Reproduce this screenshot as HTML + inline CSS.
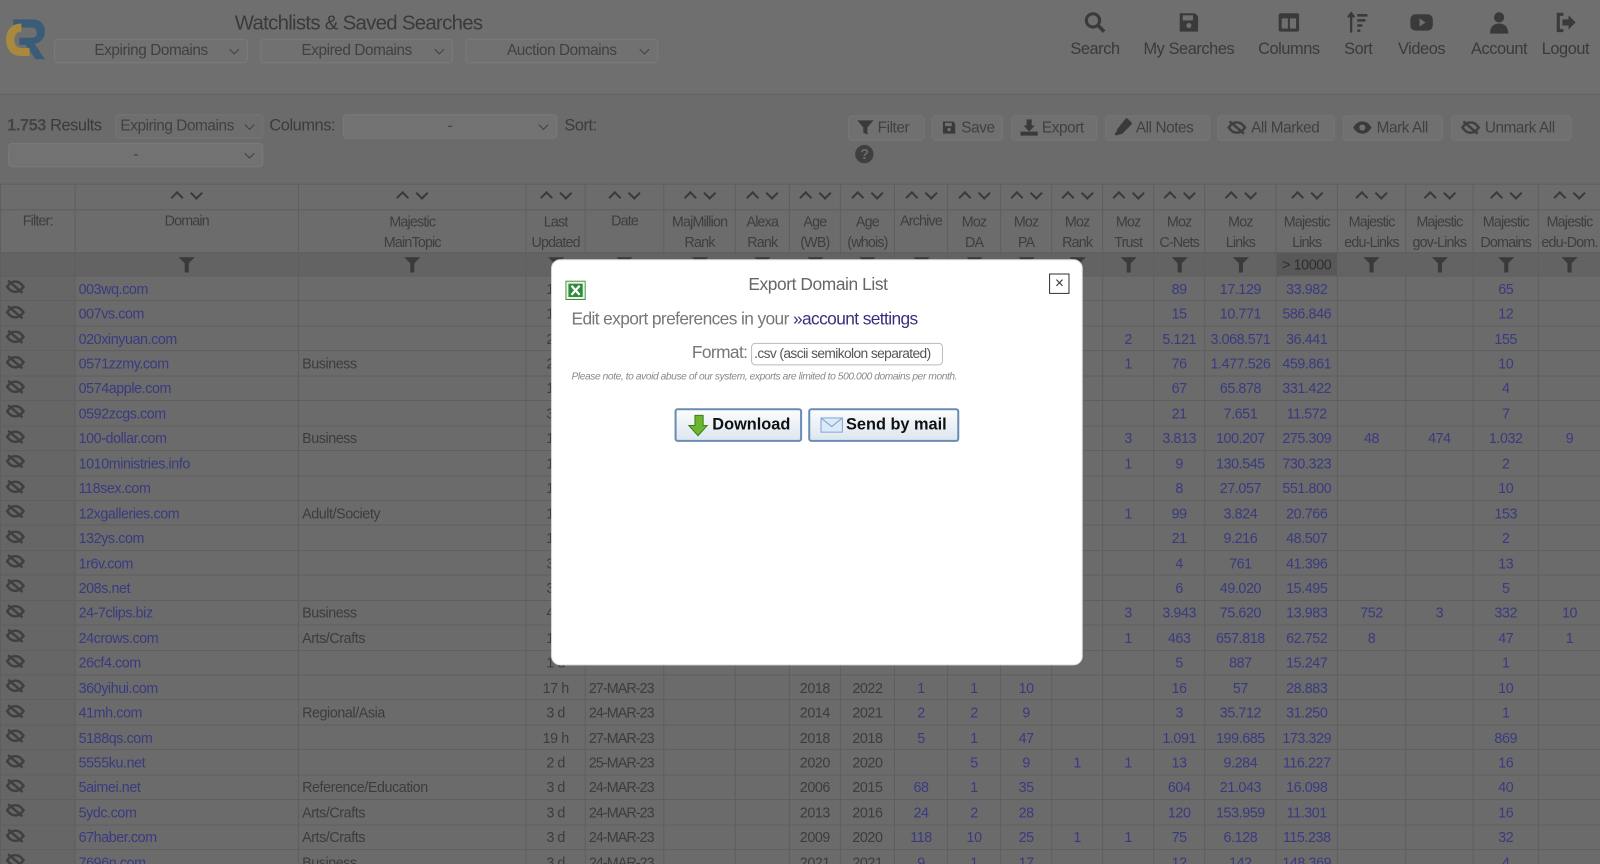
<!DOCTYPE html>
<html><head><meta charset="utf-8">
<style>
*{box-sizing:border-box;margin:0;padding:0}
html,body{width:1600px;height:864px;overflow:hidden}
body{background:#6b6b6b;font-family:"Liberation Sans",sans-serif;color:#3c3c3c;letter-spacing:-0.4px}
#wrap{position:relative;width:1568px;height:847px;overflow:hidden;transform:scale(1.0205);transform-origin:0 0;background:#6b6b6b}
.abs{position:absolute;white-space:nowrap}
.hdr{left:0;top:0;width:1600px;height:93px;background:#6f6f6f;border-bottom:1px solid #626262}
.sel{position:absolute;height:24px;border:1px solid #7a7a7a;border-radius:4px;background:#717171;font-size:15px;color:#404040;text-align:center;line-height:22px;white-space:nowrap}
.sel:after{content:"";position:absolute;right:9px;top:6px;width:6px;height:6px;border-right:1.5px solid #404040;border-bottom:1.5px solid #404040;transform:rotate(45deg)}
.nav{position:absolute;top:10px;text-align:center;font-size:16px;color:#3a3a3a;white-space:nowrap}
.nav svg{display:block;margin:0 auto 6px;height:24px}
.btn{position:absolute;top:113px;height:25px;border:1px solid #767676;border-radius:4px;background:#707070;font-size:15px;color:#404040;line-height:23px;padding-left:8px;white-space:nowrap}
.btn svg{vertical-align:-3px;margin-right:4px}
table{position:absolute;left:0;top:180px;border-collapse:collapse;table-layout:fixed;width:1568px;font-size:14px}
td,th{border:1px solid #5f5f5f;text-align:center;white-space:nowrap;overflow:hidden;font-weight:normal;padding:0}
th{color:#3e3e3e;line-height:20px}
tr.ar th{height:25px;background:#6c6c6c}
tr.lb th{height:42px;background:#6c6c6c;vertical-align:middle}
tr.fl th{height:23px;background:#636363}
tbody td{height:24.45px;color:#3a3a80}
tbody td.l{text-align:left;padding-left:3px}
tbody td.g{color:#3c3c3c}
tbody td.e{background:#666;text-align:left;padding-left:4px}
.arr{display:inline-block;width:9px;height:9px;border-left:2.5px solid #3a3a3a;border-top:2.5px solid #3a3a3a;transform:rotate(45deg);margin:6px 5px 0}
.arr.d{transform:rotate(-135deg);margin-top:0;vertical-align:4px}
.fi{display:inline-block;width:16px;height:15px;position:relative;top:3px}
.modal{left:540px;top:254px;width:521px;height:398px;background:#fff;border-radius:9px;border:1px solid #ddd}
.mb{position:absolute;top:145px;height:33px;border:2px solid #6a8cb3;border-radius:3px;background:linear-gradient(#fbfcfd,#dde6f0);font-family:"Liberation Sans",sans-serif;font-weight:bold;font-size:16px;color:#111;line-height:29px;letter-spacing:0}
</style></head><body><div id="wrap">
<svg width="0" height="0" style="position:absolute"><defs>
<symbol id="es" viewBox="0 0 20 16"><path d="M2 8c3-4 5-5 8-5s5 1 8 5c-3 4-5 5-8 5S5 12 2 8z" fill="none" stroke="#3f3f3f" stroke-width="2.4"/><path d="M3 2l14 12" stroke="#3f3f3f" stroke-width="2.4"/></symbol>
<symbol id="fn" viewBox="0 0 16 15"><path d="M0 0h16L10 6v9H6V6z" fill="#3a3a3a"/></symbol>
</defs></svg>
<div class="abs hdr"></div>
<svg class="abs" style="left:3px;top:15px" width="43" height="46" viewBox="0 0 43 46"><path d="M10 4h18c10 0 13 6 13 12s-4 11-10 12l10 15h-9L22 29h-6v-7h12c4 0 5-2 5-5s-2-5-5-5H10z" fill="#3a5c78"/><path d="M18 8C8 8 3 15 3 24s5 16 15 16h8v-8h-8c-5 0-7-4-7-8s2-8 7-8z" fill="#a8893e"/></svg>
<div class="abs" style="left:230px;top:12px;font-size:20px;color:#3a3a3a;letter-spacing:-0.7px">Watchlists &amp; Saved Searches</div>
<div class="sel" style="left:53px;top:38px;width:190px">Expiring Domains</div>
<div class="sel" style="left:255px;top:38px;width:189px">Expired Domains</div>
<div class="sel" style="left:456px;top:38px;width:189px">Auction Domains</div>

<div class="nav" style="left:1046px;width:54px"><svg viewBox="0 0 24 24" width="24"><circle cx="10" cy="10" r="6.5" fill="none" stroke="#3a3a3a" stroke-width="3"/><path d="M15 15l6 6" stroke="#3a3a3a" stroke-width="3.5"/></svg>Search</div>
<div class="nav" style="left:1118px;width:94px"><svg viewBox="0 0 24 24" width="24"><path d="M3 3h15l3 3v15H3z" fill="#3a3a3a"/><rect x="6" y="5" width="10" height="5" fill="#6f6f6f"/><circle cx="12" cy="15" r="2.5" fill="#6f6f6f"/></svg>My Searches</div>
<div class="nav" style="left:1231px;width:64px"><svg viewBox="0 0 24 24" width="24"><rect x="2" y="3" width="20" height="18" rx="2" fill="#3a3a3a"/><rect x="5" y="8" width="6" height="10" fill="#6f6f6f"/><rect x="13" y="8" width="6" height="10" fill="#6f6f6f"/></svg>Columns</div>
<div class="nav" style="left:1312px;width:38px"><svg viewBox="0 0 24 24" width="24"><path d="M5 22V4M2 7l3-4 3 4" stroke="#3a3a3a" stroke-width="2.2" fill="none"/><path d="M11 5h10M11 10h8M11 15h5M11 20h3" stroke="#3a3a3a" stroke-width="2.5"/></svg>Sort</div>
<div class="nav" style="left:1366px;width:54px"><svg viewBox="0 0 24 24" width="24"><rect x="1" y="4" width="22" height="16" rx="5" fill="#3a3a3a"/><path d="M10 8v8l6-4z" fill="#6f6f6f"/></svg>Videos</div>
<div class="nav" style="left:1438px;width:62px"><svg viewBox="0 0 24 24" width="24"><circle cx="12" cy="7" r="5" fill="#3a3a3a"/><path d="M3 23c0-7 4-10 9-10s9 3 9 10z" fill="#3a3a3a"/></svg>Account</div>
<div class="nav" style="left:1508px;width:52px"><svg viewBox="0 0 24 24" width="24"><path d="M10 4H5v16h5" stroke="#3a3a3a" stroke-width="3" fill="none"/><path d="M9 9h6V5l7 7-7 7v-4H9z" fill="#3a3a3a"/></svg>Logout</div>

<div class="abs" style="left:7px;top:115px;font-size:16px;color:#3a3a3a"><b style="color:#444">1.753</b> Results</div>
<div class="sel" style="left:113px;top:112px;width:145px;text-align:left;padding-left:4px;background:#6e6e6e;border-color:#747474">Expiring Domains</div>
<div class="abs" style="left:264px;top:115px;font-size:16px">Columns:</div>
<div class="sel" style="left:336px;top:112px;width:210px;background:#727272">-</div>
<div class="abs" style="left:553px;top:115px;font-size:16px">Sort:</div>
<div class="sel" style="left:8px;top:140px;width:250px;background:#727272">-</div>

<div class="btn" style="left:831px;width:75px"><svg width="16" height="16" viewBox="0 0 16 16"><path d="M0 1h16L10 8v7l-4-2V8z" fill="#3a3a3a"/></svg>Filter</div>
<div class="btn" style="left:913px;width:70px"><svg width="16" height="16" viewBox="0 0 24 24"><path d="M3 3h15l3 3v15H3z" fill="#3a3a3a"/><rect x="6" y="5" width="10" height="5" fill="#707070"/><circle cx="12" cy="15" r="2.5" fill="#707070"/></svg>Save</div>
<div class="btn" style="left:991px;width:84px"><svg width="17" height="16" viewBox="0 0 17 16"><path d="M6 0h5v6h3l-5.5 6L3 6h3z M0 12h17v4H0z" fill="#3a3a3a"/></svg>Export</div>
<div class="btn" style="left:1083px;width:103px"><svg width="17" height="17" viewBox="0 0 17 17"><path d="M12 1l4 4-9 9-4 1 1-4z M1 16l3-3" stroke="#3a3a3a" stroke-width="2.5" fill="#3a3a3a"/></svg>All Notes</div>
<div class="btn" style="left:1193px;width:115px"><svg width="20" height="16"><use href="#es"/></svg>All Marked</div>
<div class="btn" style="left:1316px;width:98px"><svg width="20" height="16" viewBox="0 0 20 16"><path d="M1 8c3-5 6-6 9-6s6 1 9 6c-3 5-6 6-9 6S4 13 1 8z" fill="#3a3a3a"/><circle cx="10" cy="8" r="3" fill="#707070"/></svg>Mark All</div>
<div class="btn" style="left:1422px;width:118px"><svg width="20" height="16"><use href="#es"/></svg>Unmark All</div>
<div class="abs" style="left:838px;top:142px;width:18px;height:18px;border-radius:50%;background:#3f3f3f;color:#6b6b6b;font-size:14px;font-weight:bold;text-align:center;line-height:18px">?</div>

<table>
<colgroup><col style="width:73px"><col style="width:219px"><col style="width:223px"><col style="width:58px"><col style="width:77px"><col style="width:70px"><col style="width:53px"><col style="width:50px"><col style="width:53px"><col style="width:52px"><col style="width:52px"><col style="width:50px"><col style="width:50px"><col style="width:50px"><col style="width:50px"><col style="width:70px"><col style="width:60px"><col style="width:67px"><col style="width:66px"><col style="width:64px"><col style="width:61px"></colgroup>
<thead>
<tr class="ar"><th></th><th><i class="arr"></i><i class="arr d"></i></th><th><i class="arr"></i><i class="arr d"></i></th><th><i class="arr"></i><i class="arr d"></i></th><th><i class="arr"></i><i class="arr d"></i></th><th><i class="arr"></i><i class="arr d"></i></th><th><i class="arr"></i><i class="arr d"></i></th><th><i class="arr"></i><i class="arr d"></i></th><th><i class="arr"></i><i class="arr d"></i></th><th><i class="arr"></i><i class="arr d"></i></th><th><i class="arr"></i><i class="arr d"></i></th><th><i class="arr"></i><i class="arr d"></i></th><th><i class="arr"></i><i class="arr d"></i></th><th><i class="arr"></i><i class="arr d"></i></th><th><i class="arr"></i><i class="arr d"></i></th><th><i class="arr"></i><i class="arr d"></i></th><th><i class="arr"></i><i class="arr d"></i></th><th><i class="arr"></i><i class="arr d"></i></th><th><i class="arr"></i><i class="arr d"></i></th><th><i class="arr"></i><i class="arr d"></i></th><th><i class="arr"></i><i class="arr d"></i></th></tr>
<tr class="lb" style="letter-spacing:-0.8px"><th style="vertical-align:top">Filter:</th><th style="vertical-align:top">Domain</th><th>Majestic<br>MainTopic</th><th>Last<br>Updated</th><th style="vertical-align:top">Date</th><th>MajMillion<br>Rank</th><th>Alexa<br>Rank</th><th>Age<br>(WB)</th><th>Age<br>(whois)</th><th style="vertical-align:top">Archive</th><th>Moz<br>DA</th><th>Moz<br>PA</th><th>Moz<br>Rank</th><th>Moz<br>Trust</th><th>Moz<br>C-Nets</th><th>Moz<br>Links</th><th>Majestic<br>Links</th><th>Majestic<br>edu-Links</th><th>Majestic<br>gov-Links</th><th>Majestic<br>Domains</th><th>Majestic<br>edu-Dom.</th></tr>
<tr class="fl"><th></th><th><svg class="fi"><use href="#fn"/></svg></th><th><svg class="fi"><use href="#fn"/></svg></th><th><svg class="fi"><use href="#fn"/></svg></th><th><svg class="fi"><use href="#fn"/></svg></th><th><svg class="fi"><use href="#fn"/></svg></th><th><svg class="fi"><use href="#fn"/></svg></th><th><svg class="fi"><use href="#fn"/></svg></th><th><svg class="fi"><use href="#fn"/></svg></th><th><svg class="fi"><use href="#fn"/></svg></th><th><svg class="fi"><use href="#fn"/></svg></th><th><svg class="fi"><use href="#fn"/></svg></th><th><svg class="fi"><use href="#fn"/></svg></th><th><svg class="fi"><use href="#fn"/></svg></th><th><svg class="fi"><use href="#fn"/></svg></th><th><svg class="fi"><use href="#fn"/></svg></th><th style="background:#585858;color:#2e2e2e">&gt; 10000</th><th><svg class="fi"><use href="#fn"/></svg></th><th><svg class="fi"><use href="#fn"/></svg></th><th><svg class="fi"><use href="#fn"/></svg></th><th><svg class="fi"><use href="#fn"/></svg></th></tr>
</thead>
<tbody>
<tr><td class="e"><svg width="20" height="16"><use href="#es"/></svg></td><td class="l">003wq.com</td><td class="l g"></td><td class="g">1 d</td><td></td><td></td><td></td><td></td><td></td><td></td><td></td><td></td><td></td><td></td><td>89</td><td>17.129</td><td>33.982</td><td></td><td></td><td>65</td><td></td></tr>
<tr><td class="e"><svg width="20" height="16"><use href="#es"/></svg></td><td class="l">007vs.com</td><td class="l g"></td><td class="g">1 d</td><td></td><td></td><td></td><td></td><td></td><td></td><td></td><td></td><td></td><td></td><td>15</td><td>10.771</td><td>586.846</td><td></td><td></td><td>12</td><td></td></tr>
<tr><td class="e"><svg width="20" height="16"><use href="#es"/></svg></td><td class="l">020xinyuan.com</td><td class="l g"></td><td class="g">2 d</td><td></td><td></td><td></td><td></td><td></td><td></td><td></td><td></td><td></td><td>2</td><td>5.121</td><td>3.068.571</td><td>36.441</td><td></td><td></td><td>155</td><td></td></tr>
<tr><td class="e"><svg width="20" height="16"><use href="#es"/></svg></td><td class="l">0571zzmy.com</td><td class="l g">Business</td><td class="g">2 d</td><td></td><td></td><td></td><td></td><td></td><td></td><td></td><td></td><td></td><td>1</td><td>76</td><td>1.477.526</td><td>459.861</td><td></td><td></td><td>10</td><td></td></tr>
<tr><td class="e"><svg width="20" height="16"><use href="#es"/></svg></td><td class="l">0574apple.com</td><td class="l g"></td><td class="g">1 d</td><td></td><td></td><td></td><td></td><td></td><td></td><td></td><td></td><td></td><td></td><td>67</td><td>65.878</td><td>331.422</td><td></td><td></td><td>4</td><td></td></tr>
<tr><td class="e"><svg width="20" height="16"><use href="#es"/></svg></td><td class="l">0592zcgs.com</td><td class="l g"></td><td class="g">3 d</td><td></td><td></td><td></td><td></td><td></td><td></td><td></td><td></td><td></td><td></td><td>21</td><td>7.651</td><td>11.572</td><td></td><td></td><td>7</td><td></td></tr>
<tr><td class="e"><svg width="20" height="16"><use href="#es"/></svg></td><td class="l">100-dollar.com</td><td class="l g">Business</td><td class="g">1 d</td><td></td><td></td><td></td><td></td><td></td><td></td><td></td><td></td><td></td><td>3</td><td>3.813</td><td>100.207</td><td>275.309</td><td>48</td><td>474</td><td>1.032</td><td>9</td></tr>
<tr><td class="e"><svg width="20" height="16"><use href="#es"/></svg></td><td class="l">1010ministries.info</td><td class="l g"></td><td class="g">1 d</td><td></td><td></td><td></td><td></td><td></td><td></td><td></td><td></td><td></td><td>1</td><td>9</td><td>130.545</td><td>730.323</td><td></td><td></td><td>2</td><td></td></tr>
<tr><td class="e"><svg width="20" height="16"><use href="#es"/></svg></td><td class="l">118sex.com</td><td class="l g"></td><td class="g">1 d</td><td></td><td></td><td></td><td></td><td></td><td></td><td></td><td></td><td></td><td></td><td>8</td><td>27.057</td><td>551.800</td><td></td><td></td><td>10</td><td></td></tr>
<tr><td class="e"><svg width="20" height="16"><use href="#es"/></svg></td><td class="l">12xgalleries.com</td><td class="l g">Adult/Society</td><td class="g">1 d</td><td></td><td></td><td></td><td></td><td></td><td></td><td></td><td></td><td></td><td>1</td><td>99</td><td>3.824</td><td>20.766</td><td></td><td></td><td>153</td><td></td></tr>
<tr><td class="e"><svg width="20" height="16"><use href="#es"/></svg></td><td class="l">132ys.com</td><td class="l g"></td><td class="g">1 d</td><td></td><td></td><td></td><td></td><td></td><td></td><td></td><td></td><td></td><td></td><td>21</td><td>9.216</td><td>48.507</td><td></td><td></td><td>2</td><td></td></tr>
<tr><td class="e"><svg width="20" height="16"><use href="#es"/></svg></td><td class="l">1r6v.com</td><td class="l g"></td><td class="g">3 d</td><td></td><td></td><td></td><td></td><td></td><td></td><td></td><td></td><td></td><td></td><td>4</td><td>761</td><td>41.396</td><td></td><td></td><td>13</td><td></td></tr>
<tr><td class="e"><svg width="20" height="16"><use href="#es"/></svg></td><td class="l">208s.net</td><td class="l g"></td><td class="g">3 d</td><td></td><td></td><td></td><td></td><td></td><td></td><td></td><td></td><td></td><td></td><td>6</td><td>49.020</td><td>15.495</td><td></td><td></td><td>5</td><td></td></tr>
<tr><td class="e"><svg width="20" height="16"><use href="#es"/></svg></td><td class="l">24-7clips.biz</td><td class="l g">Business</td><td class="g">4 d</td><td></td><td></td><td></td><td></td><td></td><td></td><td></td><td></td><td></td><td>3</td><td>3.943</td><td>75.620</td><td>13.983</td><td>752</td><td>3</td><td>332</td><td>10</td></tr>
<tr><td class="e"><svg width="20" height="16"><use href="#es"/></svg></td><td class="l">24crows.com</td><td class="l g">Arts/Crafts</td><td class="g">1 d</td><td></td><td></td><td></td><td></td><td></td><td></td><td></td><td></td><td></td><td>1</td><td>463</td><td>657.818</td><td>62.752</td><td>8</td><td></td><td>47</td><td>1</td></tr>
<tr><td class="e"><svg width="20" height="16"><use href="#es"/></svg></td><td class="l">26cf4.com</td><td class="l g"></td><td class="g">1 d</td><td></td><td></td><td></td><td></td><td></td><td></td><td></td><td></td><td></td><td></td><td>5</td><td>887</td><td>15.247</td><td></td><td></td><td>1</td><td></td></tr>
<tr><td class="e"><svg width="20" height="16"><use href="#es"/></svg></td><td class="l">360yihui.com</td><td class="l g"></td><td class="g">17 h</td><td class="l g" style="letter-spacing:-0.9px">27-MAR-23</td><td></td><td></td><td class="g">2018</td><td class="g">2022</td><td>1</td><td>1</td><td>10</td><td></td><td></td><td>16</td><td>57</td><td>28.883</td><td></td><td></td><td>10</td><td></td></tr>
<tr><td class="e"><svg width="20" height="16"><use href="#es"/></svg></td><td class="l">41mh.com</td><td class="l g">Regional/Asia</td><td class="g">3 d</td><td class="l g" style="letter-spacing:-0.9px">24-MAR-23</td><td></td><td></td><td class="g">2014</td><td class="g">2021</td><td>2</td><td>2</td><td>9</td><td></td><td></td><td>3</td><td>35.712</td><td>31.250</td><td></td><td></td><td>1</td><td></td></tr>
<tr><td class="e"><svg width="20" height="16"><use href="#es"/></svg></td><td class="l">5188qs.com</td><td class="l g"></td><td class="g">19 h</td><td class="l g" style="letter-spacing:-0.9px">27-MAR-23</td><td></td><td></td><td class="g">2018</td><td class="g">2018</td><td>5</td><td>1</td><td>47</td><td></td><td></td><td>1.091</td><td>199.685</td><td>173.329</td><td></td><td></td><td>869</td><td></td></tr>
<tr><td class="e"><svg width="20" height="16"><use href="#es"/></svg></td><td class="l">5555ku.net</td><td class="l g"></td><td class="g">2 d</td><td class="l g" style="letter-spacing:-0.9px">25-MAR-23</td><td></td><td></td><td class="g">2020</td><td class="g">2020</td><td></td><td>5</td><td>9</td><td>1</td><td>1</td><td>13</td><td>9.284</td><td>116.227</td><td></td><td></td><td>16</td><td></td></tr>
<tr><td class="e"><svg width="20" height="16"><use href="#es"/></svg></td><td class="l">5aimei.net</td><td class="l g">Reference/Education</td><td class="g">3 d</td><td class="l g" style="letter-spacing:-0.9px">24-MAR-23</td><td></td><td></td><td class="g">2006</td><td class="g">2015</td><td>68</td><td>1</td><td>35</td><td></td><td></td><td>604</td><td>21.043</td><td>16.098</td><td></td><td></td><td>40</td><td></td></tr>
<tr><td class="e"><svg width="20" height="16"><use href="#es"/></svg></td><td class="l">5ydc.com</td><td class="l g">Arts/Crafts</td><td class="g">3 d</td><td class="l g" style="letter-spacing:-0.9px">24-MAR-23</td><td></td><td></td><td class="g">2013</td><td class="g">2016</td><td>24</td><td>2</td><td>28</td><td></td><td></td><td>120</td><td>153.959</td><td>11.301</td><td></td><td></td><td>16</td><td></td></tr>
<tr><td class="e"><svg width="20" height="16"><use href="#es"/></svg></td><td class="l">67haber.com</td><td class="l g">Arts/Crafts</td><td class="g">3 d</td><td class="l g" style="letter-spacing:-0.9px">24-MAR-23</td><td></td><td></td><td class="g">2009</td><td class="g">2020</td><td>118</td><td>10</td><td>25</td><td>1</td><td>1</td><td>75</td><td>6.128</td><td>115.238</td><td></td><td></td><td>32</td><td></td></tr>
<tr><td class="e"><svg width="20" height="16"><use href="#es"/></svg></td><td class="l">7696n.com</td><td class="l g">Business</td><td class="g">3 d</td><td class="l g" style="letter-spacing:-0.9px">24-MAR-23</td><td></td><td></td><td class="g">2021</td><td class="g">2021</td><td>9</td><td>1</td><td>17</td><td></td><td></td><td>12</td><td>142</td><td>148.369</td><td></td><td></td><td>4</td><td></td></tr>
</tbody></table>

<div class="abs modal">
  <svg class="abs" style="left:13px;top:20px" width="20" height="19" viewBox="0 0 20 19"><rect x="0.5" y="0.5" width="19" height="18" fill="#e9f3e6" stroke="#3d8a3d"/><rect x="3" y="3" width="14" height="13" fill="#2f8a3a"/><path d="M6 5l8 9M14 5l-8 9" stroke="#fff" stroke-width="2.2"/></svg>
  <div class="abs" style="left:0;width:521px;top:14px;text-align:center;font-size:17px;color:#666">Export Domain List</div>
  <div class="abs" style="left:487px;top:13px;width:20px;height:20px;border:1.5px solid #333;text-align:center;font-size:15px;line-height:17px;color:#333">×</div>
  <div class="abs" style="left:19px;top:48px;font-size:17px;color:#777;letter-spacing:-0.6px">Edit export preferences in your <span style="color:#3b2e7e">»account settings</span></div>
  <div class="abs" style="left:137px;top:81px;font-size:17px;color:#777;letter-spacing:-0.6px">Format:</div>
  <div class="abs" style="left:195px;top:81px;width:188px;height:22px;border:1px solid #bbb;border-radius:4px;font-size:13.5px;color:#555;line-height:20px;padding-left:2px;letter-spacing:-0.6px;overflow:hidden">.csv (ascii semikolon separated)</div>
  <div class="abs" style="left:19px;top:109px;font-size:10px;font-style:italic;color:#888;letter-spacing:-0.4px">Please note, to avoid abuse of our system, exports are limited to 500.000 domains per month.</div>
  <div class="mb" style="left:120px;width:125px"><svg style="position:absolute;left:10px;top:4px" width="22" height="22" viewBox="0 0 22 22"><path d="M8 1h8v10h4L11 21 2 11h6z" fill="#6cb52e" stroke="#3e7d1b"/></svg><span style="position:absolute;left:35px">Download</span></div>
  <div class="mb" style="left:251px;width:148px"><svg style="position:absolute;left:10px;top:7px" width="22" height="15" viewBox="0 0 22 15"><rect x="0.5" y="0.5" width="21" height="14" fill="#dbe9f8" stroke="#7aa3d0"/><path d="M1 1l10 8 10-8" stroke="#7aa3d0" fill="none"/></svg><span style="position:absolute;left:35px">Send by mail</span></div>
</div>
</div></body></html>
